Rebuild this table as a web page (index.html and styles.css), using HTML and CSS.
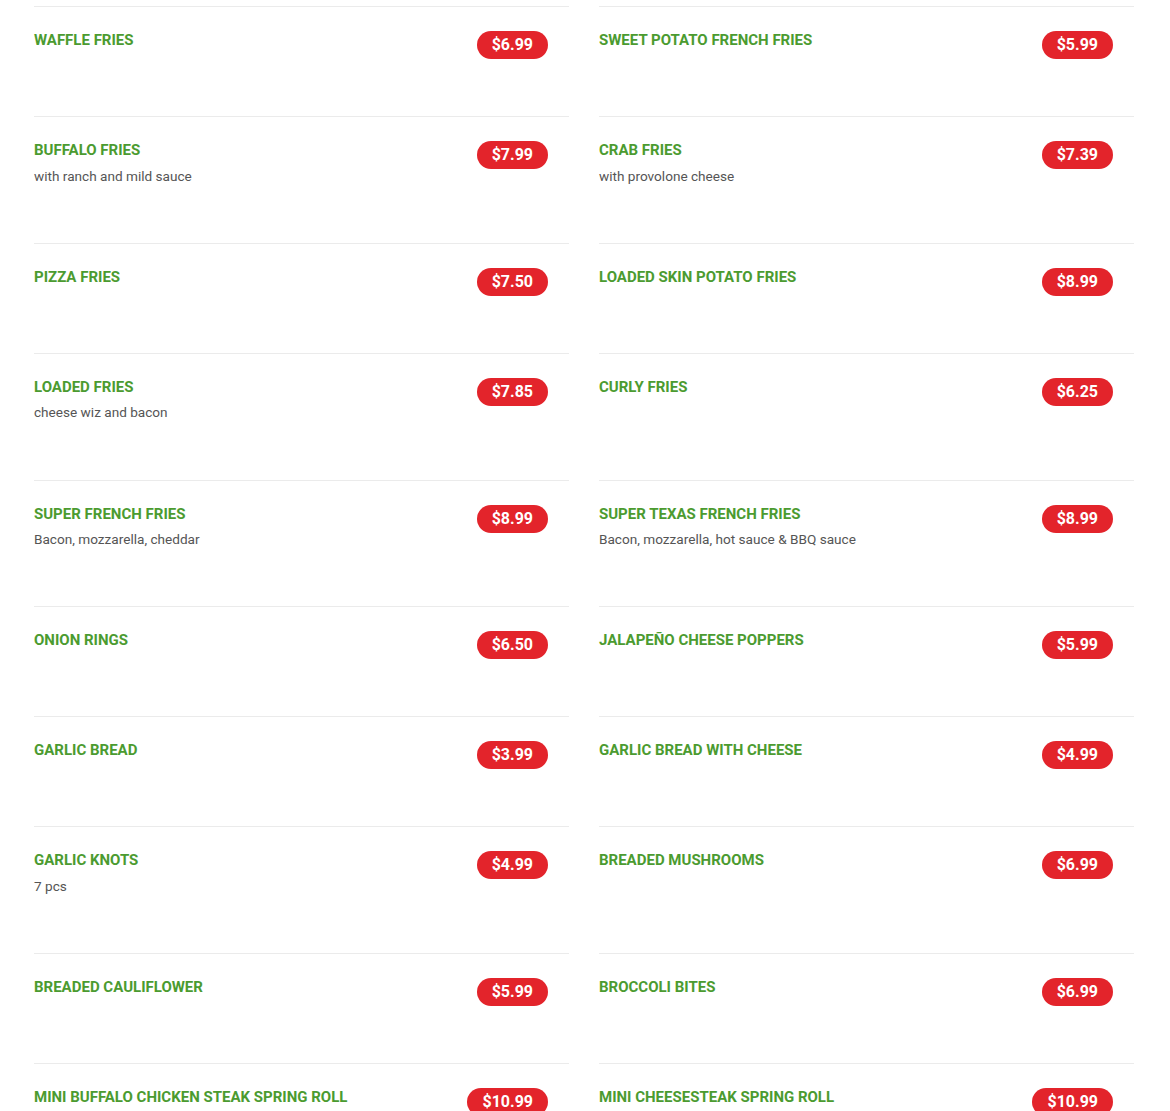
FILE: index.html
```html
<html>
<head>
<title>Fries &amp; Sides</title>
<link rel="stylesheet" href="styles.css">
</head>
<body>
<div class="menu">
  <div class="item">
    <div class="info"><div class="name">Waffle Fries</div></div>
    <div class="price">$6.99</div>
  </div>
  <div class="item">
    <div class="info"><div class="name">Sweet Potato French Fries</div></div>
    <div class="price">$5.99</div>
  </div>
  <div class="item">
    <div class="info"><div class="name">Buffalo Fries</div><div class="desc">with ranch and mild sauce</div></div>
    <div class="price">$7.99</div>
  </div>
  <div class="item">
    <div class="info"><div class="name">Crab Fries</div><div class="desc">with provolone cheese</div></div>
    <div class="price">$7.39</div>
  </div>
  <div class="item">
    <div class="info"><div class="name">Pizza Fries</div></div>
    <div class="price">$7.50</div>
  </div>
  <div class="item">
    <div class="info"><div class="name">Loaded Skin Potato Fries</div></div>
    <div class="price">$8.99</div>
  </div>
  <div class="item">
    <div class="info"><div class="name">Loaded Fries</div><div class="desc">cheese wiz and bacon</div></div>
    <div class="price">$7.85</div>
  </div>
  <div class="item">
    <div class="info"><div class="name">Curly Fries</div></div>
    <div class="price">$6.25</div>
  </div>
  <div class="item">
    <div class="info"><div class="name">Super French Fries</div><div class="desc">Bacon, mozzarella, cheddar</div></div>
    <div class="price">$8.99</div>
  </div>
  <div class="item">
    <div class="info"><div class="name">Super Texas French Fries</div><div class="desc">Bacon, mozzarella, hot sauce &amp; BBQ sauce</div></div>
    <div class="price">$8.99</div>
  </div>
  <div class="item">
    <div class="info"><div class="name">Onion Rings</div></div>
    <div class="price">$6.50</div>
  </div>
  <div class="item">
    <div class="info"><div class="name">Jalapeño Cheese Poppers</div></div>
    <div class="price">$5.99</div>
  </div>
  <div class="item">
    <div class="info"><div class="name">Garlic Bread</div></div>
    <div class="price">$3.99</div>
  </div>
  <div class="item">
    <div class="info"><div class="name">Garlic Bread with Cheese</div></div>
    <div class="price">$4.99</div>
  </div>
  <div class="item">
    <div class="info"><div class="name">Garlic Knots</div><div class="desc">7 pcs</div></div>
    <div class="price">$4.99</div>
  </div>
  <div class="item">
    <div class="info"><div class="name">Breaded Mushrooms</div></div>
    <div class="price">$6.99</div>
  </div>
  <div class="item">
    <div class="info"><div class="name">Breaded Cauliflower</div></div>
    <div class="price">$5.99</div>
  </div>
  <div class="item">
    <div class="info"><div class="name">Broccoli Bites</div></div>
    <div class="price">$6.99</div>
  </div>
  <div class="item">
    <div class="info"><div class="name">Mini Buffalo Chicken Steak Spring Roll</div></div>
    <div class="price">$10.99</div>
  </div>
  <div class="item">
    <div class="info"><div class="name">Mini Cheesesteak Spring Roll</div></div>
    <div class="price">$10.99</div>
  </div>
</div>
</body>
</html>
```

FILE: styles.css
```css
body {
    margin: 0;
    background: #fff;
    font-family: Roboto, "Liberation Sans", Arial, sans-serif;
}

.menu {
    display: grid;
    grid-template-columns: 535px 535px;
    column-gap: 30px;
    padding: 6px 34px 0 34px;
}

.item {
    display: flex;
    align-items: flex-start;
    justify-content: space-between;
    border-top: 1px solid #ebebeb;
    padding: 23px 21px 57.2px 0;
}

.name {
    color: #4b9b30;
    font-size: 15px;
    font-weight: bold;
    line-height: 20px;
    text-transform: uppercase;
}

.desc {
    margin-top: 5.4px;
    color: #555;
    font-size: 13.6px;
    line-height: 20px;
}

.price {
    margin-top: 1px;
    background: #e3242b;
    color: #fff;
    font-size: 16px;
    font-weight: bold;
    line-height: 28px;
    height: 28px;
    padding: 0 15px;
    border-radius: 14px;
}
```
